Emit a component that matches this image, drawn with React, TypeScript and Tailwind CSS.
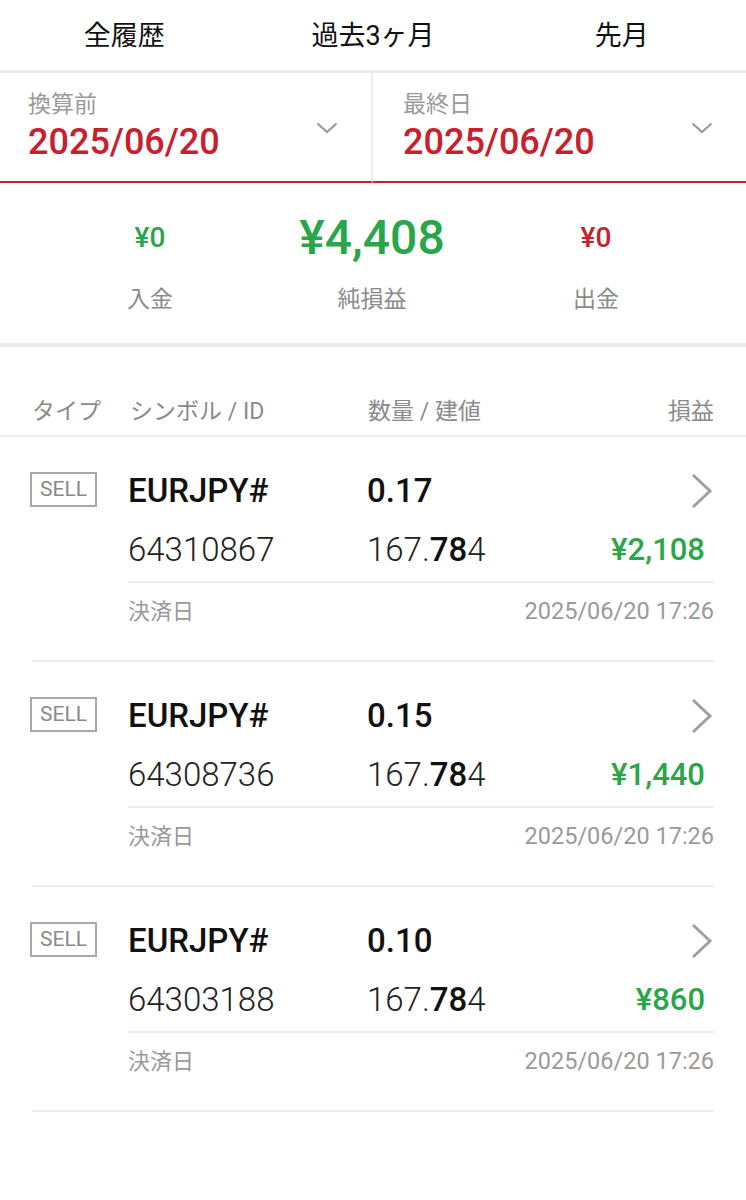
import React from "react";

const FONT = { fontFamily: 'Roboto, "Noto Sans CJK JP", sans-serif' };

function ChevronDown() {
  return (
    <svg width="22" height="12" viewBox="0 0 22 12" fill="none">
      <path d="M1.5 1.5 L11 10 L20.5 1.5" stroke="#9a9a9a" strokeWidth="2.2" />
    </svg>
  );
}

function ChevronRight() {
  return (
    <svg width="22" height="36" viewBox="0 0 22 36" fill="none">
      <path d="M2 2 L19 18 L2 34" stroke="#a0a0a0" strokeWidth="3" />
    </svg>
  );
}

const trades = [
  { qty: "0.17", id: "64310867", pl: "¥2,108" },
  { qty: "0.15", id: "64308736", pl: "¥1,440" },
  { qty: "0.10", id: "64303188", pl: "¥860" },
];

function TradeRow({ qty, id, pl }: { qty: string; id: string; pl: string }) {
  return (
    <div className="mx-[32px] border-b-2 border-[#ececec] pt-[33px] pb-[33px]">
      <div className="flex">
        <div className="w-[96px] shrink-0 pt-[2px]">
          <div className="-ml-[2px] flex h-[35px] w-[67px] items-center justify-center border-2 border-[#a8a8a8] text-[21px] leading-none text-[#8a8a8a]">
            SELL
          </div>
        </div>
        <div className="flex-1">
          <div className="flex h-[40px] items-center">
            <div className="w-[239px] text-[33px] font-medium leading-none text-[#111]">EURJPY#</div>
            <div className="flex-1 text-[33px] font-medium leading-none text-[#111]">{qty}</div>
            <div className="pr-[1px] pt-[1px]">
              <ChevronRight />
            </div>
          </div>
          <div className="mt-[19px] flex h-[40px] items-center">
            <div className="w-[239px] text-[33px] font-light leading-none text-[#222]">{id}</div>
            <div className="flex-1 text-[33px] font-light leading-none text-[#222]">
              167.<span className="font-medium text-[#111]">78</span>4
            </div>
            <div className="pr-[9px] text-[31px] font-medium leading-none text-[#2aa64a]">{pl}</div>
          </div>
          <div className="mt-[12px] h-[2px] bg-[#ececec]" />
          <div className="mt-[14px] flex h-[30px] items-center justify-between">
            <div className="text-[22px] leading-none text-[#9a9a9a]">決済日</div>
            <div className="text-[23.5px] leading-none text-[#9a9a9a]">2025/06/20 17:26</div>
          </div>
        </div>
      </div>
    </div>
  );
}

export default function App() {
  return (
    <div className="min-h-[1200px] w-[746px] bg-white" style={FONT}>
      {/* Tabs */}
      <div className="grid h-[73px] grid-cols-3 items-center border-b-[3px] border-[#e9e9e9] text-[27px] text-[#111]">
        <div className="pt-[2px] text-center">全履歴</div>
        <div className="pt-[2px] text-center">過去3ヶ月</div>
        <div className="pt-[2px] text-center">先月</div>
      </div>

      {/* Date selectors */}
      <div className="flex h-[110px]">
        <div className="relative flex-1 border-b-2 border-r-2 border-[#c8202d] border-r-[#ececec] pl-[28px]">
          <div className="mt-[17px] text-[23px] leading-[30px] text-[#9a9a9a]">換算前</div>
          <div className="mt-0 text-[36px] font-medium leading-[44px] text-[#c8202d]">2025/06/20</div>
          <div className="absolute right-[33px] top-[49px]">
            <ChevronDown />
          </div>
        </div>
        <div className="relative flex-1 border-b-2 border-[#c8202d] pl-[30px]">
          <div className="mt-[17px] text-[23px] leading-[30px] text-[#9a9a9a]">最終日</div>
          <div className="mt-0 text-[36px] font-medium leading-[44px] text-[#c8202d]">2025/06/20</div>
          <div className="absolute right-[33px] top-[49px]">
            <ChevronDown />
          </div>
        </div>
      </div>

      {/* Summary */}
      <div className="flex h-[164px] border-b-4 border-[#ececec]">
        <div className="flex w-[300px] flex-col items-center pt-[33px]">
          <div className="flex h-[44px] items-center text-[28px] font-medium leading-none text-[#2aa64a]">¥0</div>
          <div className="mt-[28px] text-[23px] leading-none text-[#8a8a8a]">入金</div>
        </div>
        <div className="-ml-[154px] flex flex-1 flex-col items-center pt-[31px]">
          <div className="flex h-[48px] items-center text-[48px] font-medium leading-none text-[#2aa64a]">¥4,408</div>
          <div className="mt-[26px] text-[23px] leading-none text-[#8a8a8a]">純損益</div>
        </div>
        <div className="-ml-[152px] flex w-[300px] flex-col items-center pt-[33px]">
          <div className="flex h-[44px] items-center text-[28px] font-medium leading-none text-[#c8202d]">¥0</div>
          <div className="mt-[28px] text-[23px] leading-none text-[#8a8a8a]">出金</div>
        </div>
      </div>

      {/* Header */}
      <div className="mt-[48px] flex h-[42px] items-center border-b-2 border-[#ececec] pb-[6px] text-[23px] text-[#8a8a8a]">
        <div className="w-[130px] pl-[32px]">タイプ</div>
        <div className="w-[238px]">シンボル / ID</div>
        <div className="flex-1">数量 / 建値</div>
        <div className="pr-[32px]">損益</div>
      </div>

      {trades.map((t) => (
        <TradeRow key={t.id} {...t} />
      ))}
    </div>
  );
}
